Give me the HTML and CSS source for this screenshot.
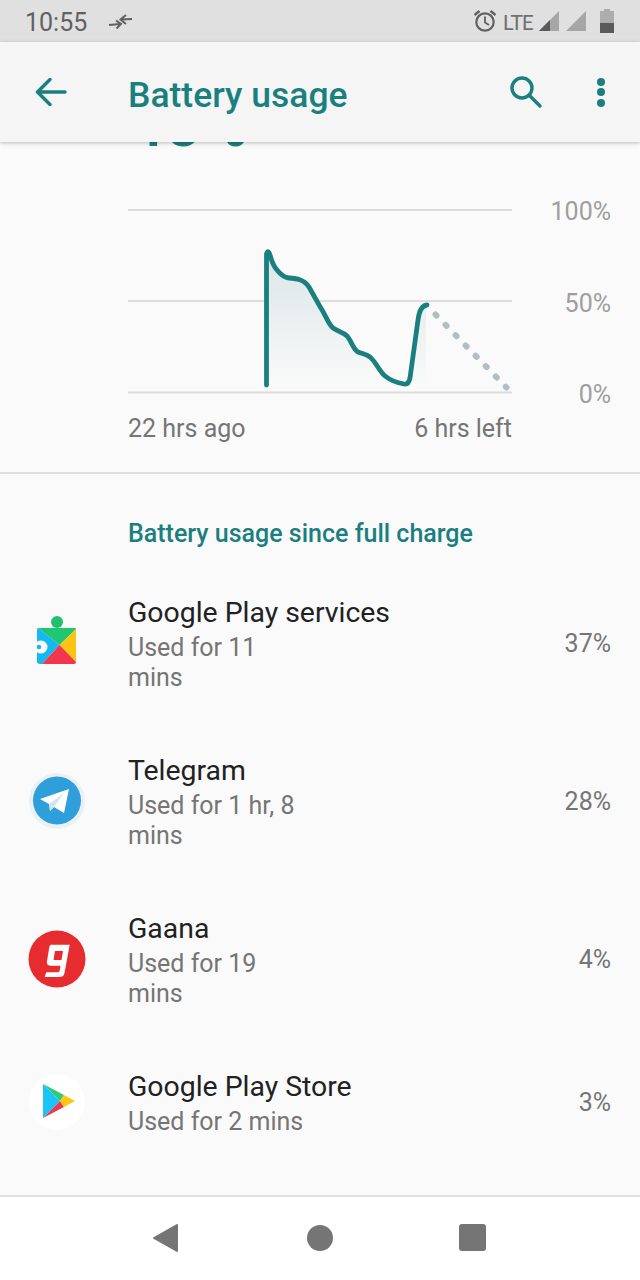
FILE: index.html
```html
<!DOCTYPE html>
<html lang="en">
<head>
    <meta charset="UTF-8">
    <meta name="viewport" content="width=device-width, initial-scale=1.0">
    <title>Battery usage</title>
    <link rel="stylesheet" href="styles.css">
</head>
<body>
    <div class="phone">
        <div class="status-bar">
            <div class="status-left">
                <span class="clock">10:55</span>
                <svg class="data-saver" width="26" height="20" viewBox="0 0 26 20">
                    <path d="M2 14 L13 13 M9 9.500 L14 13 L9.500 17.500 M25 8 L14 8.500 M19 4 L13.500 8.500 L19 13" fill="none" stroke="#616161" stroke-width="2"/>
                </svg>
            </div>
            <div class="status-right">
                <svg width="24" height="24" viewBox="0 0 24 24">
                    <circle cx="12" cy="13" r="8.700" fill="none" stroke="#616161" stroke-width="2.200"/>
                    <path d="M12 7.500 V13.500 L16 16" fill="none" stroke="#616161" stroke-width="1.800"/>
                    <path d="M1.500 6 L6.500 2 M22.500 6 L17.500 2" stroke="#616161" stroke-width="2.400"/>
                </svg>
                <span class="lte">LTE</span>
                <svg class="signal" width="20" height="22" viewBox="0 0 20 22">
                    <path d="M0 21 L20 1 V21 Z" fill="#a6a6a6"/>
                    <path d="M0 21 L11 10 V21 Z" fill="#5a5a5a"/>
                </svg>
                <svg class="signal" width="20" height="22" viewBox="0 0 20 22">
                    <path d="M0 21 L20 1 V21 Z" fill="#a6a6a6"/>
                </svg>
                <svg class="battery" width="14" height="24" viewBox="0 0 14 24">
                    <path d="M4 0 H10 V2 H14 V24 H0 V2 H4 Z" fill="#adadad"/>
                    <path d="M0 14 H14 V24 H0 Z" fill="#5a5a5a"/>
                </svg>
            </div>
        </div>

        <header class="toolbar">
            <svg class="back-icon" width="32" height="28" viewBox="0 0 32 28">
                <path d="M30 14 H2.500 M15 1.500 L2.500 14 L15 26.500" fill="none" stroke="#1a7f7f" stroke-width="3.400" stroke-linecap="round" stroke-linejoin="round"/>
            </svg>
            <h1 class="toolbar-title">Battery usage</h1>
            <svg class="search-icon" width="34" height="34" viewBox="0 0 34 34">
                <circle cx="12" cy="13" r="10" fill="none" stroke="#1a7f7f" stroke-width="3.400"/>
                <path d="M19.500 20.500 L30 31" stroke="#1a7f7f" stroke-width="3.400" stroke-linecap="round"/>
            </svg>
            <div class="overflow-icon"><i></i><i></i><i></i></div>
        </header>

        <main class="content">
            <section class="chart-section">
                <div class="big-percent">45%</div>
                <div class="chart">
                    <svg class="chart-lines" width="384" height="186" viewBox="0 0 384 186">
                        <defs>
                            <linearGradient id="fade" x1="0" y1="0" x2="0" y2="1">
                                <stop offset="0" stop-color="#dbe5e7"/>
                                <stop offset="1" stop-color="#f9fafa"/>
                            </linearGradient>
                        </defs>
                        <path d="M0 2 H384 M0 93 H384 M0 184.500 H384" stroke="#dcdcdc" stroke-width="2" fill="none"/>
                        <path d="M138.500 177 V46 C139.500 42 141 44 142 47 C144 54 145 58 149 62 C153 67 157 69.500 161 70 C168 70.500 176 71 181 79 L192 98.700 C197 106 200 115 204 119 C209 124 214 123 219 128 C223 132 225 141 230 144 C235 146 238 146 242 149 C248 154 251 163 257 168 C262 172 270 175 276 176 C279 176.500 281 175 282 170 L290 112 C291 104 293 97.500 298 97 V177 Z" fill="url(#fade)"/>
                        <path d="M138.500 177 V46 C139.500 42 141 44 142 47 C144 54 145 58 149 62 C153 67 157 69.500 161 70 C168 70.500 176 71 181 79 L192 98.700 C197 106 200 115 204 119 C209 124 214 123 219 128 C223 132 225 141 230 144 C235 146 238 146 242 149 C248 154 251 163 257 168 C262 172 270 175 276 176 C279 176.500 281 175 282 170 L290 112 C291 104 293 97.500 299 97" fill="none" stroke="#1a7f7f" stroke-width="4.800" stroke-linecap="round" stroke-linejoin="round"/>
                        <path d="M307.500 106.500 L378.500 179.500" fill="none" stroke="#b0bec5" stroke-width="6" stroke-linecap="round" stroke-dasharray="1.500 12.900"/>
                    </svg>
                    <div class="chart-scale">
                        <span>100%</span>
                        <span>50%</span>
                        <span>0%</span>
                    </div>
                </div>
                <div class="chart-times">
                    <span>22 hrs ago</span>
                    <span>6 hrs left</span>
                </div>
            </section>

            <h2 class="section-title">Battery usage since full charge</h2>

            <ul class="app-list">
                <li class="app-row">
                    <div class="app-icon icon-up">
                        <svg width="40" height="50" viewBox="0 0 40 50">
                            <circle cx="20" cy="6" r="6" fill="#23c06c"/>
                            <path d="M1 12 H38 Q39 12 39 13 L22.500 29 Z" fill="#1fc772"/>
                            <path d="M1 12 Q0 12 0 14 V46 Q0 48 5 48 L22.500 29 Z" fill="#14b9f2"/>
                            <path d="M39 13 V46 L22.500 29 Z" fill="#fbc312"/>
                            <path d="M5 48 L22.500 29 L39 46 Q39 48 37 48 Z" fill="#f4364c"/>
                            <circle cx="4" cy="31" r="6.500" fill="#fafafa"/>
                            <circle cx="2" cy="31" r="2.200" fill="#14b9f2"/>
                        </svg>
                    </div>
                    <div class="app-text">
                        <div class="app-name">Google Play services</div>
                        <div class="app-used">Used for 11<br>mins</div>
                    </div>
                    <div class="app-percent">37%</div>
                </li>
                <li class="app-row">
                    <div class="app-icon">
                        <svg width="56" height="56" viewBox="0 0 56 56">
                            <circle cx="28" cy="28" r="28" fill="#eaf1f5"/>
                            <circle cx="28" cy="27.500" r="24" fill="#2f9fdb"/>
                            <path d="M11 26 L40 16 L35 40 L25 34 L21 38 L20 31 Z" fill="#fff"/>
                            <path d="M20 31 L35 20 L25 34 L21 38 Z" fill="#d5e4f0"/>
                        </svg>
                    </div>
                    <div class="app-text">
                        <div class="app-name">Telegram</div>
                        <div class="app-used">Used for 1 hr, 8<br>mins</div>
                    </div>
                    <div class="app-percent">28%</div>
                </li>
                <li class="app-row">
                    <div class="app-icon">
                        <svg width="58" height="58" viewBox="0 0 58 58">
                            <circle cx="29" cy="29" r="28.500" fill="#e72c30"/>
                            <path d="M23 14.700 H41.700 L36.500 43 C36 46 34 47 31 47 H16.700 L18.300 42.300 H29 C31 42.300 31.500 41.500 31.800 40 L32.500 35.700 H22.500 C19.500 35.700 18.500 33.500 19 31 L21 19 C21.500 16 22 14.700 23 14.700 Z M27 21 H35 L33.500 30 H25.500 Z" fill="#fff" fill-rule="evenodd"/>
                        </svg>
                    </div>
                    <div class="app-text">
                        <div class="app-name">Gaana</div>
                        <div class="app-used">Used for 19<br>mins</div>
                    </div>
                    <div class="app-percent">4%</div>
                </li>
                <li class="app-row app-row-short">
                    <div class="app-icon">
                        <svg width="58" height="58" viewBox="0 0 58 58">
                            <circle cx="29" cy="29" r="28" fill="#fff"/>
                            <path d="M15 11 L32 28 L15 45 Z" fill="#19c5f7"/>
                            <path d="M15 11 L36 22 L32 28 Z" fill="#2fc97b"/>
                            <path d="M15 45 L36 34 L32 28 Z" fill="#e9384f"/>
                            <path d="M36 22 L47 28 L36 34 L32 28 Z" fill="#fdc80f"/>
                        </svg>
                    </div>
                    <div class="app-text">
                        <div class="app-name">Google Play Store</div>
                        <div class="app-used">Used for 2 mins</div>
                    </div>
                    <div class="app-percent">3%</div>
                </li>
            </ul>
        </main>

        <nav class="nav-bar">
            <svg width="28" height="30" viewBox="0 0 28 30">
                <path d="M25 2 V28 L2 15 Z" fill="#757575" stroke="#757575" stroke-width="2" stroke-linejoin="round"/>
            </svg>
            <div class="nav-home"></div>
            <div class="nav-recent"></div>
        </nav>
    </div>
</body>
</html>
```

FILE: styles.css
```css
* {
    box-sizing: border-box;
}

body {
    font-family: Roboto, "Noto Sans", sans-serif;
    margin: 0;
    padding: 0;
    background: #fafafa;
}

.phone {
    display: flex;
    flex-direction: column;
    width: 640px;
    height: 1280px;
    overflow: hidden;
}

.status-bar {
    display: flex;
    justify-content: space-between;
    align-items: center;
    height: 42px;
    padding: 0 26px 0 25px;
    background-color: #e0e0e0;
    color: #616161;
}

.status-left,
.status-right {
    display: flex;
    align-items: center;
}

.clock {
    margin-top: 2px;
    font-size: 25px;
}

.data-saver {
    margin-left: 20px;
}

.lte {
    margin-left: 6px;
    color: #707070;
    font-size: 21px;
    letter-spacing: -1px;
    font-family: Lato, sans-serif;
}

.signal {
    margin-left: 6px;
}

.signal + .signal {
    margin-left: 7px;
}

.battery {
    margin-left: 14px;
}

.toolbar {
    position: relative;
    z-index: 2;
    display: flex;
    align-items: center;
    height: 100px;
    padding-left: 35px;
    background-color: #f5f5f5;
    box-shadow: 0 1px 4px rgba(0, 0, 0, 0.25);
}

.toolbar-title {
    margin: 6px 0 0 61px;
    flex: 1;
    color: #1a7f7f;
    font-size: 35.500px;
    font-weight: 500;
}

.search-icon {
    margin-right: 53px;
}

.overflow-icon {
    display: flex;
    flex-direction: column;
    gap: 2.500px;
    margin-right: 35px;
}

.overflow-icon i {
    width: 8px;
    height: 8px;
    border-radius: 50%;
    background-color: #1a7f7f;
}

.content {
    flex: 1;
    overflow: hidden;
}

/* the big number has scrolled under the toolbar, only its bottom shows */
.chart-section {
    display: flow-root;
    height: 332px;
    padding-left: 128px;
    border-bottom: 2px solid #e0e0e0;
}

.big-percent {
    height: 60px;
    margin-top: -54px;
    color: #1a7f7f;
    font-size: 64px;
    line-height: 74px;
    font-weight: 500;
}

.chart {
    display: flex;
    margin-top: 60px;
}

.chart-lines {
    display: block;
    overflow: visible;
}

.chart-scale {
    display: flex;
    flex-direction: column;
    justify-content: space-between;
    flex: 1;
    height: 187px;
    padding: 4px 29px 0 0;
    text-align: right;
    color: #9e9e9e;
    font-size: 25px;
    line-height: 0;
}

.chart-times {
    display: flex;
    justify-content: space-between;
    width: 384px;
    margin-top: 19px;
    color: #757575;
    font-size: 25px;
    line-height: 30px;
}

.section-title {
    margin: 45px 0 0;
    padding-left: 128px;
    color: #1a7f7f;
    font-size: 25px;
    line-height: 30px;
    font-weight: 500;
}

.app-list {
    margin: 15px 0 0;
    padding: 0;
    list-style: none;
}

.app-row {
    display: flex;
    align-items: center;
    height: 158px;
    padding-right: 29px;
}

.app-row-short {
    height: 128px;
}

.app-icon {
    display: flex;
    justify-content: center;
    width: 114px;
    margin-right: 14px;
}

.icon-up {
    margin-bottom: 5px;
}

.app-text {
    flex: 1;
    padding-top: 3px;
}

.app-name {
    color: #212121;
    font-size: 28.400px;
    line-height: 34px;
}

.app-used {
    margin-top: 3px;
    color: #757575;
    font-size: 25px;
    line-height: 30px;
}

.app-percent {
    color: #757575;
    font-size: 25px;
}

.nav-bar {
    display: flex;
    justify-content: space-between;
    align-items: center;
    height: 85px;
    padding: 0 154px 2px 152px;
    background-color: #fff;
    border-top: 2px solid #e0e0e0;
}

.nav-home {
    width: 26px;
    height: 26px;
    border-radius: 50%;
    background-color: #757575;
}

.nav-recent {
    width: 27px;
    height: 27px;
    border-radius: 3px;
    background-color: #757575;
}
```
